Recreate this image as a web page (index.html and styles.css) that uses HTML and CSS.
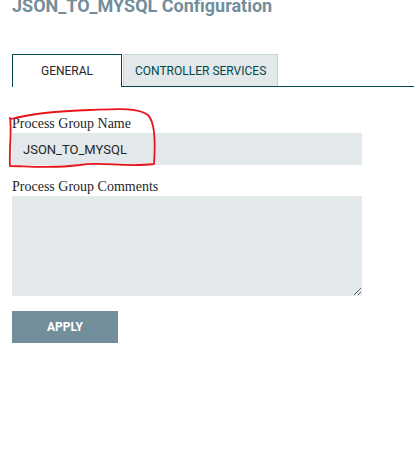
FILE: index.html
```html
<!DOCTYPE html>
<html>
<head>
<meta charset="utf-8">
<link rel="stylesheet" href="styles.css">
</head>
<body>
<div class="dialog">
  <h1 class="title">JSON_TO_MYSQL Configuration</h1>
  <div class="tabs">
    <div class="tab tab-active">GENERAL</div>
    <div class="tab">CONTROLLER SERVICES</div>
  </div>
  <div class="form">
    <div class="field field-name">
      <label class="label">Process Group Name</label>
      <input class="input" type="text" value="JSON_TO_MYSQL">
      <svg class="annotation" width="170" height="70" viewBox="0 105 170 70">
        <path d="M11,119 C30,114 60,111 90,110 C115,109 138,107 148,115 C156,123 155,150 154,164 C125,168 100,161 80,165 C50,169 25,166 10,166 C9,150 12,130 10,118" fill="none" stroke="#e8141c" stroke-width="1.8" stroke-linecap="round" stroke-linejoin="round"/>
      </svg>
    </div>
    <div class="field field-comments">
      <label class="label">Process Group Comments</label>
      <textarea class="textarea"></textarea>
    </div>
    <button class="apply">APPLY</button>
  </div>
</div>
</body>
</html>
```
FILE: styles.css
```css
* { box-sizing: border-box; }
html, body { margin: 0; padding: 0; background: #fff; }
body { font-family: Roboto, "Liberation Sans", sans-serif; }
.dialog { padding: 0 12px; }
.title {
  margin: 0;
  font-size: 18px;
  line-height: 12px;
  font-weight: 700;
  color: #728e9b;
  white-space: nowrap;
}
.tabs {
  margin-top: 42px;
  display: flex;
  gap: 1px;
  border-bottom: 1px solid #004849;
  margin-right: -12px;
}
.tab {
  height: 32px;
  padding: 0 11px;
  display: flex;
  align-items: center;
  justify-content: center;
  font-size: 12px;
  color: #004849;
  background: #e3e8eb;
  border: 1px solid #c7d2d7;
  border-bottom: none;
}
.tab-active {
  width: 110px;
  height: 33px;
  margin-bottom: -1px;
  background: #fff;
  border: 1px solid #004849;
  border-bottom: none;
  color: #262626;
  padding-bottom: 1px;
}
.form { padding-top: 29px; }
.field { position: relative; }
.label {
  display: block;
  font-family: "Liberation Serif", serif;
  font-size: 14px;
  line-height: 16px;
  color: #262626;
}
.input {
  display: block;
  margin-top: 1px;
  width: 350px;
  height: 32px;
  border: none;
  outline: none;
  background: #e3e8eb;
  padding: 0 11px;
  font-family: Roboto, sans-serif;
  font-size: 13px;
  color: #262626;
}
.field-comments { margin-top: 14px; }
.textarea {
  display: block;
  margin-top: 1px;
  width: 350px;
  height: 100px;
  border: none;
  outline: none;
  background: #e3e8eb;
  font-family: Roboto, sans-serif;
  font-size: 12px;
  resize: both;
}
.annotation {
  position: absolute;
  left: -12px;
  top: -11px;
  pointer-events: none;
}
.apply {
  display: block;
  margin-top: 15px;
  width: 106px;
  height: 32px;
  border: none;
  background: #728e9b;
  color: #fff;
  font-family: Roboto, sans-serif;
  font-weight: 700;
  font-size: 12px;
  padding: 0;
}
```
